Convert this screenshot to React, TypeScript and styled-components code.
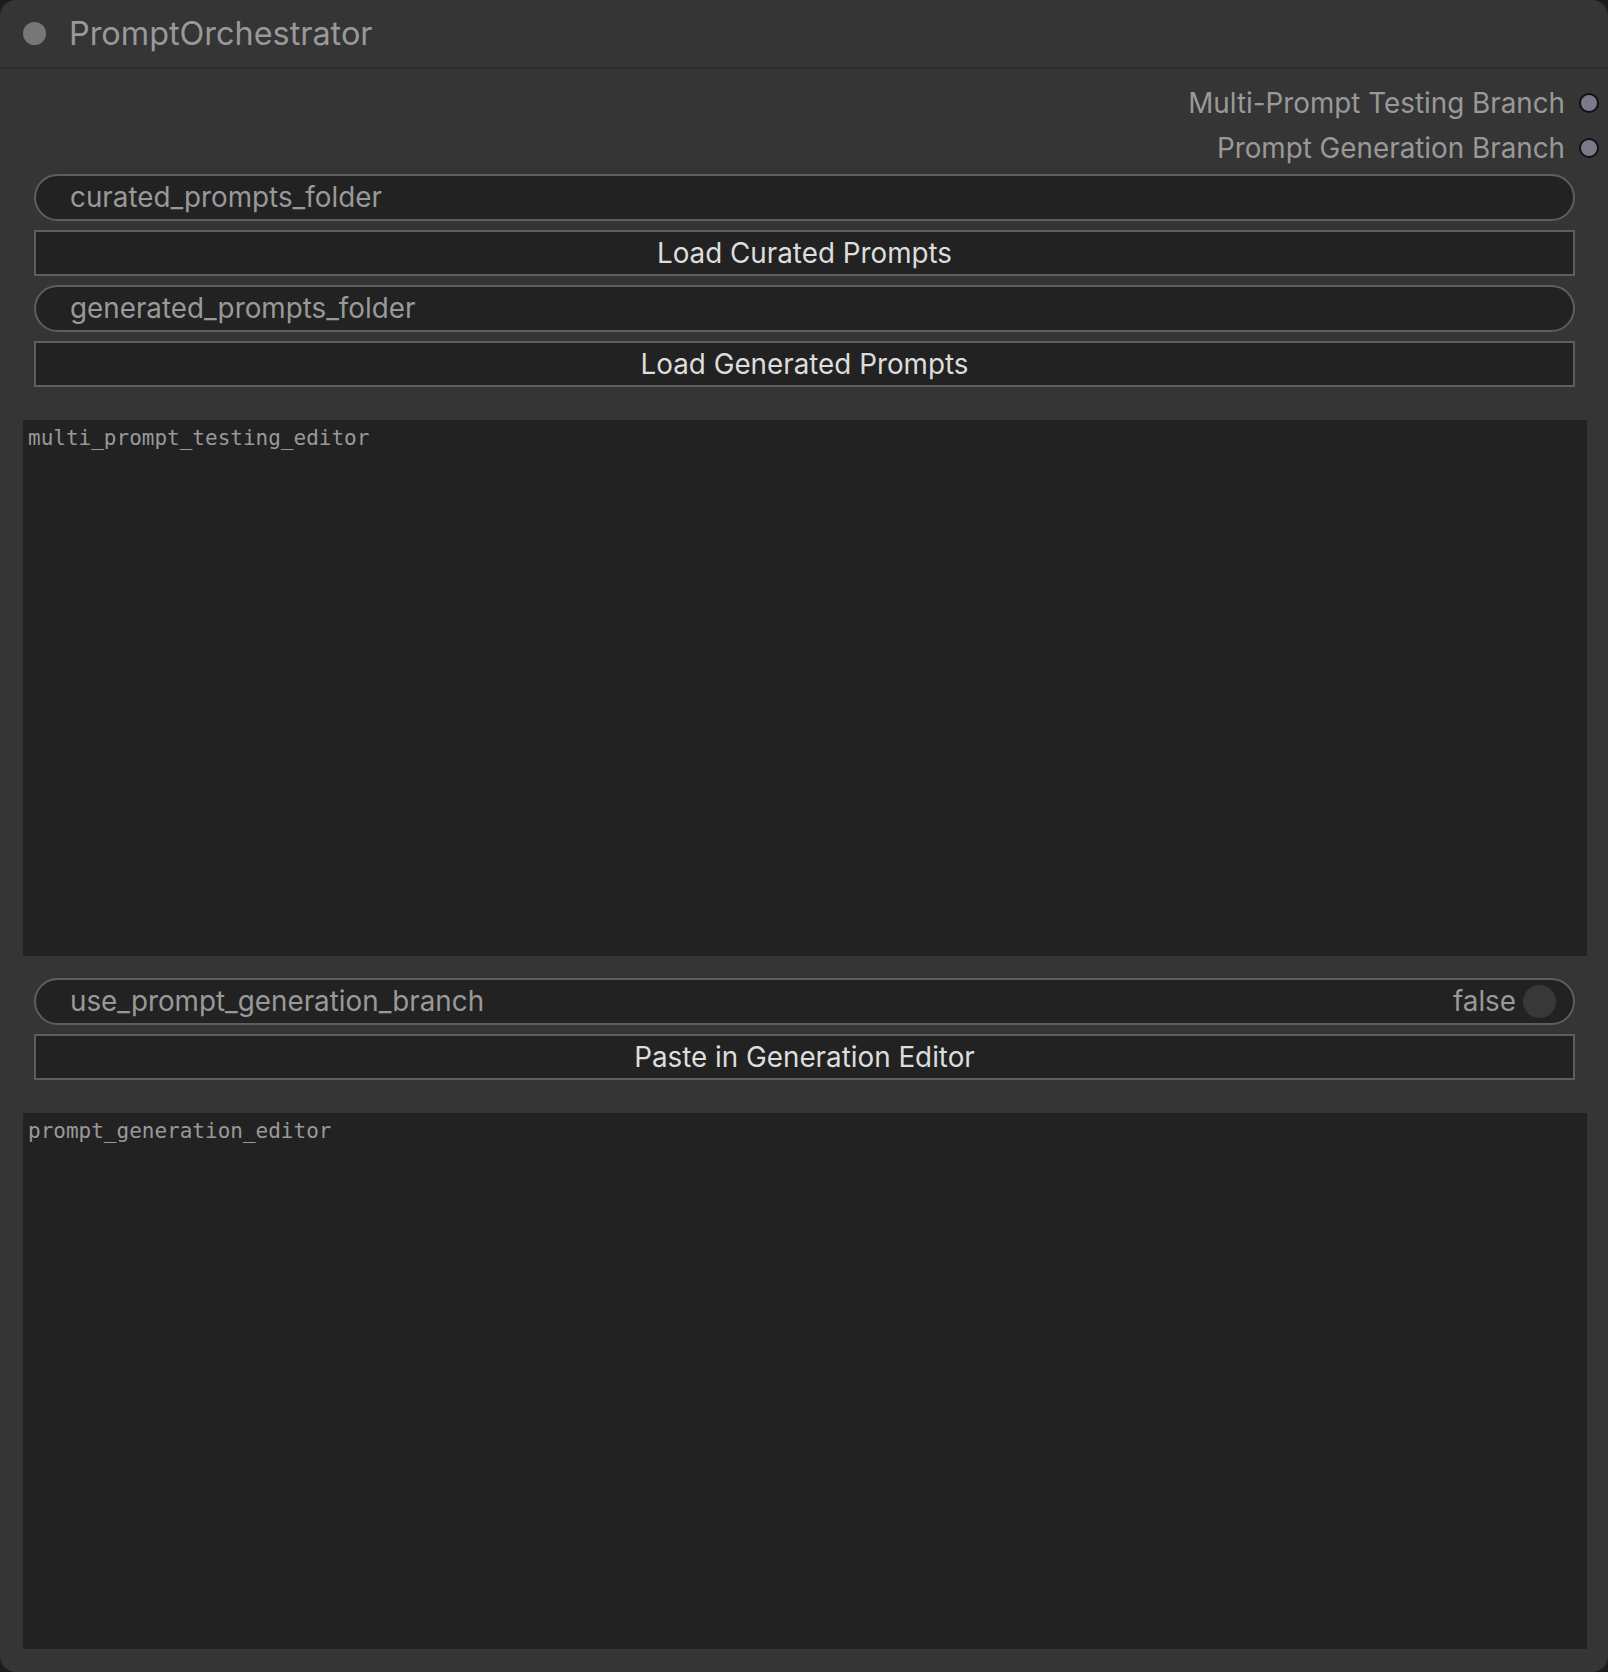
import styled, { createGlobalStyle } from "styled-components";

const Global = createGlobalStyle`
  html, body {
    margin: 0;
    padding: 0;
    background: #1c1c1c;
  }
  * { box-sizing: border-box; }
`;

function App() {
  return (
    <>
      <Global />
      <Node>
        <TitleBar>
          <TitleDot />
          <Title>PromptOrchestrator</Title>
        </TitleBar>
        <Outputs>
          <OutputRow>
            Multi-Prompt Testing Branch
            <Slot />
          </OutputRow>
          <OutputRow>
            Prompt Generation Branch
            <Slot />
          </OutputRow>
        </Outputs>
        <Widgets>
          <Field>curated_prompts_folder</Field>
          <Button>Load Curated Prompts</Button>
          <Field>generated_prompts_folder</Field>
          <Button>Load Generated Prompts</Button>
        </Widgets>
        <Editor $top={33}>multi_prompt_testing_editor</Editor>
        <Widgets $top={22}>
          <Field>
            use_prompt_generation_branch
            <ToggleValue>
              false
              <Knob />
            </ToggleValue>
          </Field>
          <Button>Paste in Generation Editor</Button>
        </Widgets>
        <Editor $top={33}>prompt_generation_editor</Editor>
      </Node>
    </>
  );
}

export default App;

const Node = styled.div`
  width: 1608px;
  height: 1672px;
  background: #353535;
  border-radius: 16px;
  overflow: hidden;
  display: flex;
  flex-direction: column;
  font-family: Inter, "Noto Sans", sans-serif;
`;

const TitleBar = styled.div`
  height: 69px;
  flex-shrink: 0;
  display: flex;
  align-items: center;
  gap: 23px;
  padding-left: 23px;
  border-bottom: 2px solid #2c2c2c;
`;

const TitleDot = styled.div`
  width: 23px;
  height: 23px;
  border-radius: 50%;
  background: #777777;
`;

const Title = styled.div`
  font-size: 32.4px;
  color: #999999;
`;

const Outputs = styled.div`
  display: flex;
  flex-direction: column;
  align-items: flex-end;
  padding: 11px 9px 0 0;
`;

const OutputRow = styled.div`
  height: 45px;
  display: flex;
  align-items: center;
  gap: 14px;
  font-size: 27.8px;
  color: #999999;
`;

const Slot = styled.div`
  width: 20px;
  height: 20px;
  border-radius: 50%;
  background: #7a7a8c;
  border: 2px solid #111111;
`;

const Widgets = styled.div<{ $top?: number }>`
  display: flex;
  flex-direction: column;
  gap: 9px;
  padding: 0 33px 0 34px;
  margin-top: ${(p) => p.$top ?? 4}px;
`;

const Field = styled.div`
  height: 46.5px;
  border: 2px solid #5e5e5e;
  border-radius: 24px;
  background: #222222;
  display: flex;
  align-items: center;
  justify-content: space-between;
  padding: 0 17px 0 34px;
  font-size: 27.8px;
  color: #999999;
`;

const ToggleValue = styled.div`
  display: flex;
  align-items: center;
  gap: 7px;
`;

const Knob = styled.div`
  width: 33px;
  height: 33px;
  border-radius: 50%;
  background: #383838;
`;

const Button = styled.div`
  height: 46.5px;
  border: 2px solid #5e5e5e;
  background: #222222;
  display: flex;
  align-items: center;
  justify-content: center;
  font-size: 27.8px;
  color: #dddddd;
`;

const Editor = styled.div<{ $top: number }>`
  margin: ${(p) => p.$top}px 21px 0 23px;
  height: 536px;
  flex-shrink: 0;
  background: #222222;
  padding: 6px 5px;
  font-family: "DejaVu Sans Mono", "Liberation Mono", monospace;
  font-size: 21px;
  color: #999999;
`;
